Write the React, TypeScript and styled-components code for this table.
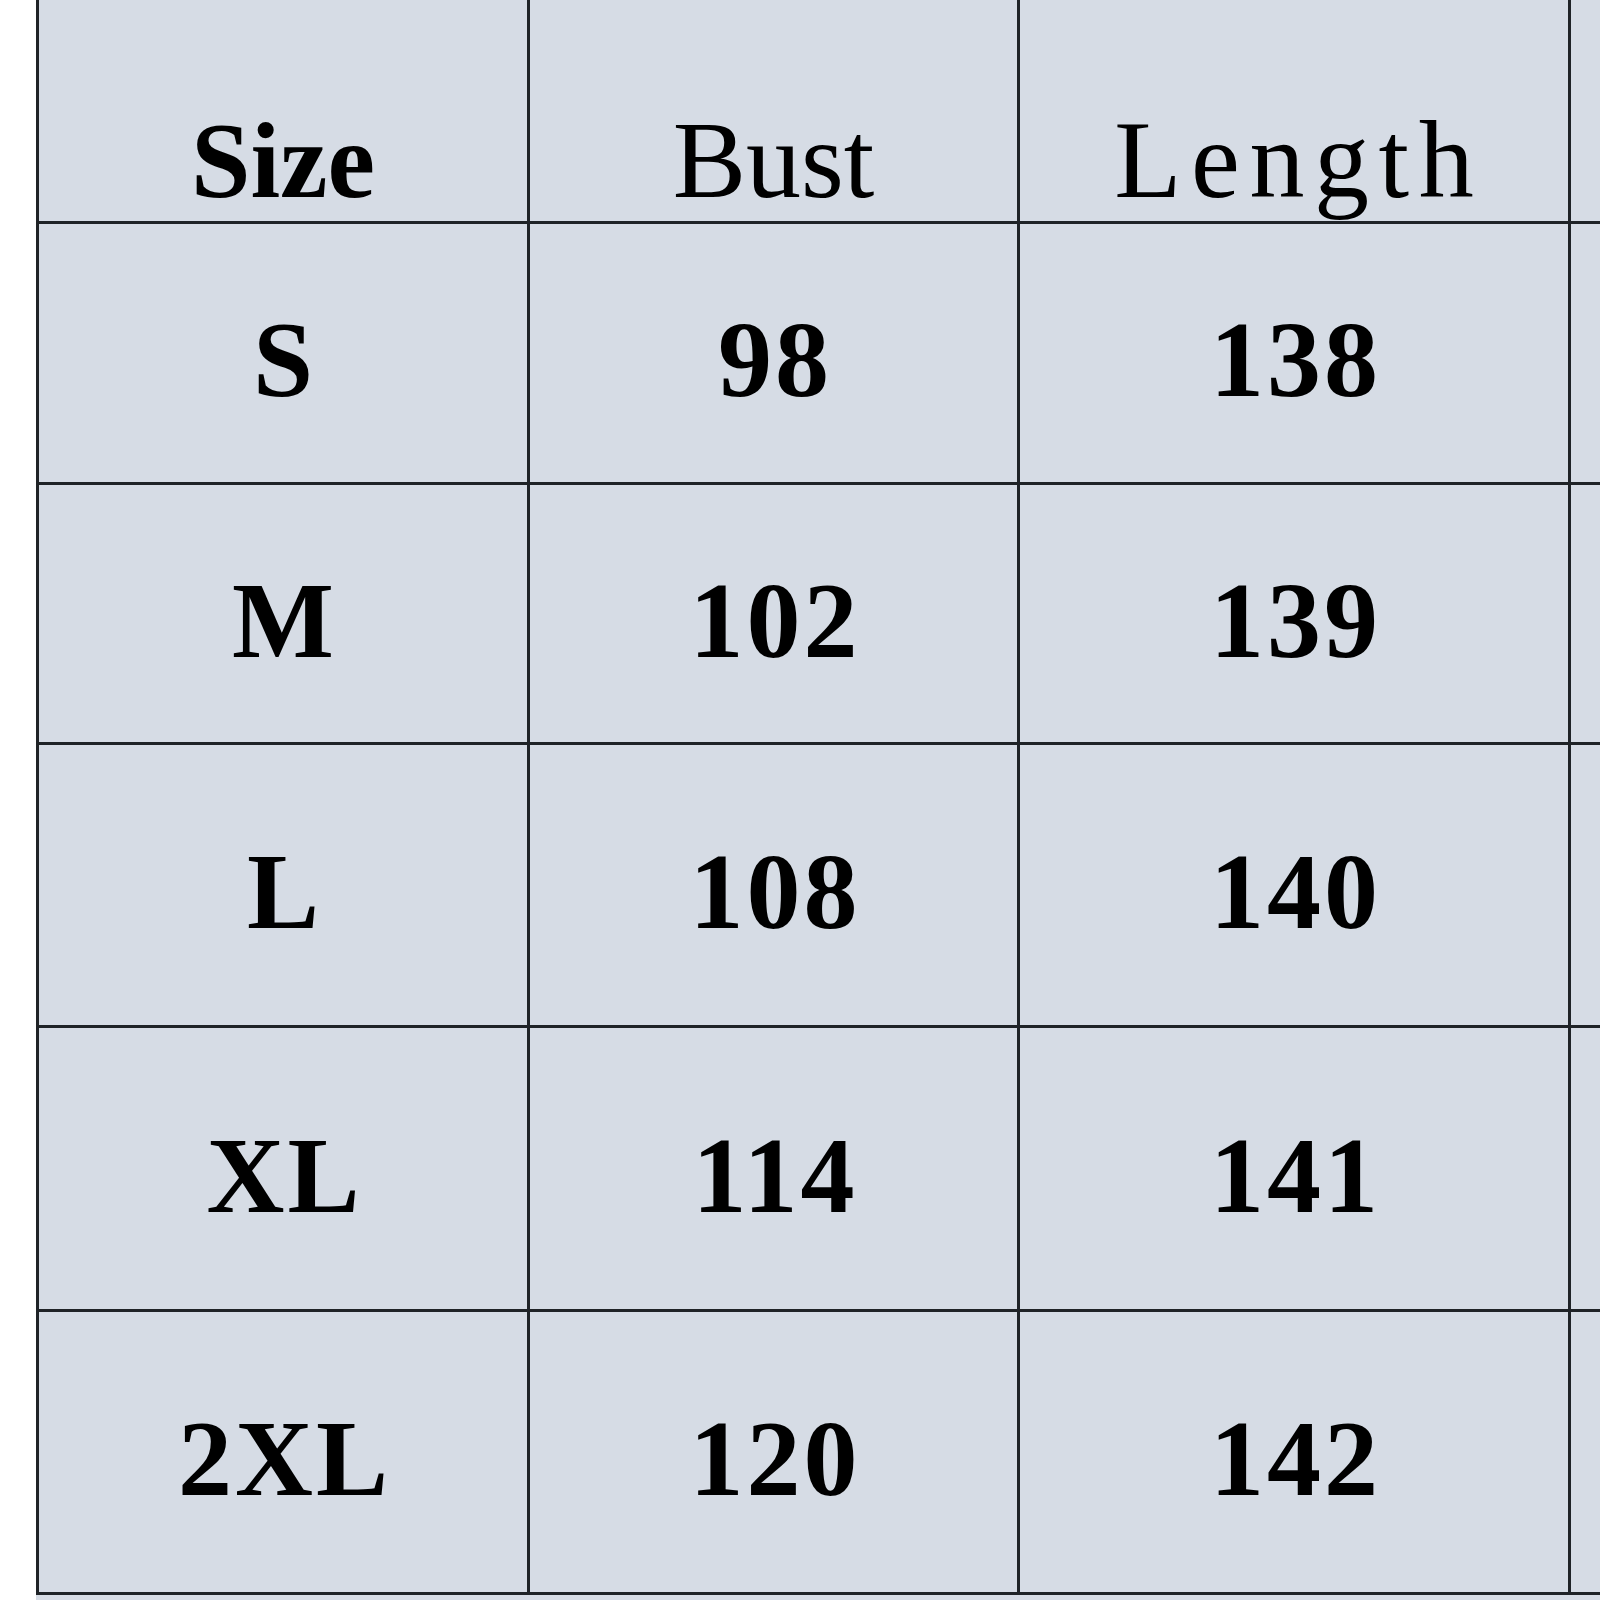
import React from 'react';
import styled, { createGlobalStyle } from 'styled-components';

const GlobalStyle = createGlobalStyle`
  html, body {
    margin: 0;
    padding: 0;
    background: #ffffff;
  }
  body {
    font-family: "Liberation Serif", "Times New Roman", serif;
  }
`;

const LINE = '#1f2327';
const CELL_BG = '#d6dce5';

const Page = styled.div`
  display: flex;
  width: 1600px;
  height: 1600px;
  overflow: hidden;
`;

const LeftGutter = styled.div`
  flex: 0 0 36px;
  background: #ffffff;
`;

const TableArea = styled.div`
  flex: 1;
  background: ${CELL_BG};
  overflow: hidden;
`;

const SizeTable = styled.div`
  display: grid;
  grid-template-columns: 488px 487px 548px 120px;
  grid-template-rows: 221px 258px 257px 280px 281px 280px;
  gap: 3px;
  width: max-content;
  background: ${LINE};
  border-left: 3px solid ${LINE};
  border-bottom: 3px solid ${LINE};
`;

const HeadCell = styled.div<{ $bold?: boolean; $spacing?: number }>`
  display: flex;
  align-items: flex-end;
  justify-content: center;
  padding-bottom: 6px;
  background: ${CELL_BG};
  color: #000;
  font-size: ${(p) => (p.$bold ? 107 : 110)}px;
  font-weight: ${(p) => (p.$bold ? 700 : 400)};
  line-height: 1;
  letter-spacing: ${(p) => p.$spacing || 0}px;
  text-indent: ${(p) => p.$spacing || 0}px;
`;

const ValueCell = styled.div`
  display: flex;
  align-items: center;
  justify-content: center;
  padding-top: 14px;
  box-sizing: border-box;
  background: ${CELL_BG};
  color: #000;
  font-size: 108px;
  font-weight: 700;
  line-height: 1;
  letter-spacing: 3px;
  text-indent: 3px;
`;

const EmptyCell = styled.div`
  background: ${CELL_BG};
`;

const rows: [string, number, number][] = [
  ['S', 98, 138],
  ['M', 102, 139],
  ['L', 108, 140],
  ['XL', 114, 141],
  ['2XL', 120, 142],
];

export default function App() {
  return (
    <>
      <GlobalStyle />
      <Page>
        <LeftGutter />
        <TableArea>
          <SizeTable>
            <HeadCell $bold>Size</HeadCell>
            <HeadCell>Bust</HeadCell>
            <HeadCell $spacing={9.6}>Length</HeadCell>
            <EmptyCell />
            {rows.map(([size, bust, length]) => (
              <React.Fragment key={size}>
                <ValueCell>{size}</ValueCell>
                <ValueCell>{bust}</ValueCell>
                <ValueCell>{length}</ValueCell>
                <EmptyCell />
              </React.Fragment>
            ))}
          </SizeTable>
        </TableArea>
      </Page>
    </>
  );
}
